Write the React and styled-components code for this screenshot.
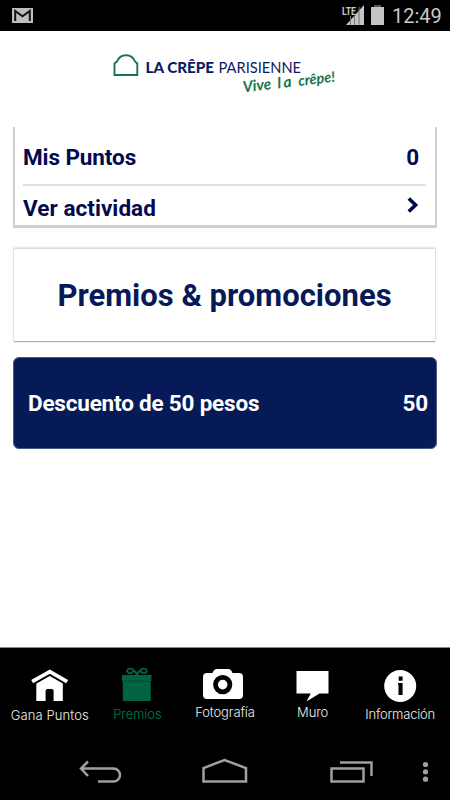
import React from 'react';
import styled, { createGlobalStyle } from 'styled-components';

const GlobalStyle = createGlobalStyle`
  * { box-sizing: border-box; }
  body { margin: 0; background: #fff; font-family: Roboto, 'Liberation Sans', sans-serif; }
  svg { display: block; flex: none; }
`;

const Screen = styled.div`
  display: flex;
  flex-direction: column;
  width: 450px;
  height: 800px;
  overflow: hidden;
  background: #fff;
`;

const StatusBar = styled.header`
  display: flex;
  justify-content: space-between;
  align-items: flex-start;
  height: 31px;
  padding: 0 8px 0 12px;
  background: #000;
  color: #c8c8c8;
`;

const StatusGroup = styled.div`
  display: flex;
  align-items: flex-start;
`;

const Clock = styled.span`
  width: 50px;
  margin-left: 7px;
  font-size: 20px;
  line-height: 33px;
  white-space: nowrap;
`;

const Brand = styled.div`
  height: 96px;
  padding: 13px 0 0 100px;
`;

const Content = styled.main`
  flex: 1;
  padding: 0 13px;
`;

const PointsPanel = styled.section`
  height: 101px;
  padding: 0 9px 0 8px;
  border: solid #d0d0d0;
  border-width: 0 2px 3px 2px;
`;

const PointsRow = styled.div`
  display: flex;
  justify-content: space-between;
  align-items: center;
  height: ${(p) => p.$height}px;
  padding-top: ${(p) => p.$top}px;
  padding-right: 7px;
  color: #02094f;
  font-size: 22.5px;
  font-weight: 700;
  letter-spacing: ${(p) => p.$spacing || 0}px;
  border-bottom: ${(p) => (p.$divided ? '2px solid #e2e2e2' : '0')};
`;

const TitleCard = styled.h1`
  display: flex;
  align-items: center;
  justify-content: center;
  height: 93px;
  margin: 20px 2px 0 1px;
  padding-top: 1px;
  border-top: 1px solid #dedede;
  box-shadow: 0 0 2px #bbb, 0 1px 1px #aaa;
  color: #071a58;
  font-size: 31px;
  font-weight: 700;
`;

const Reward = styled.section`
  display: flex;
  align-items: center;
  justify-content: space-between;
  height: 92px;
  margin-top: 16px;
  padding: 0 8px 0 14px;
  border: 1px solid #4b5a88;
  border-radius: 6px;
  background: #071a58;
  color: #fff;
  font-size: 22.5px;
  font-weight: 700;
  letter-spacing: -0.2px;
`;

const TabBar = styled.nav`
  display: grid;
  grid-template-columns: repeat(5, 1fr);
  height: 97px;
  padding: 17px 6px 0;
  border-top: 1px solid #888;
  background: #000;
`;

const Tab = styled.div`
  display: flex;
  flex-direction: column;
  align-items: center;
`;

const TabLabel = styled.span`
  margin-top: ${(p) => p.$top}px;
  font-family: Inter, 'Liberation Sans', sans-serif;
  font-size: 13px;
  font-weight: 300;
  line-height: 16px;
  letter-spacing: ${(p) => p.$spacing}px;
  color: ${(p) => (p.$active ? '#007a50' : '#f0f0f0')};
  white-space: nowrap;
`;

const SystemBar = styled.footer`
  height: 56px;
  background: #000;
`;

const MailIcon = () => (
  <svg width="22" height="31" viewBox="12 0 22 31">
    <rect x="12" y="8" width="21" height="15" fill="#bdbdbd" />
    <path d="M15.2 21V11l7.3 5.2L29.8 11v10" fill="none" stroke="#111" strokeWidth="2" />
  </svg>
);

const SignalIcon = () => (
  <svg width="44" height="31" viewBox="342 0 44 31">
    <path d="M347 25 365 5V25Z" fill="#c4c4c4" />
    <path d="M351.5 16v9M355.5 10v15M360 7v18" stroke="#777" strokeWidth="1" />
    <path d="M342 15.5H356.5L358 10V4H342" fill="#000" />
    <text x="343" y="14.5" fontSize="11.5" fontWeight="700" fill="#c8c8c8" textLength="14" lengthAdjust="spacingAndGlyphs">LTE</text>
    <path d="M375 5h7v2h3v18h-13V7h3Z" fill="#c4c4c4" />
    <path d="M375 5h7v2h-7z" fill="#555" />
  </svg>
);

const Logo = () => (
  <svg width="250" height="60" viewBox="100 44 250 60">
    <path d="M114.5 75V63.5L117 61.5C118.5 57.5 121.5 55.2 126 55.2S133.5 57.5 135 61.5L137.3 63.5V75Z" fill="none" stroke="#16754e" strokeWidth="1.9" />
    <g fontFamily="Lato, sans-serif" fontSize="15" fill="#091b62">
      <text x="145.5" y="72.5" fontWeight="900" textLength="68.5" lengthAdjust="spacingAndGlyphs">LA CRÊPE</text>
      <text x="218.5" y="72.5" textLength="82.5" lengthAdjust="spacingAndGlyphs">PARISIENNE</text>
    </g>
    <g fontFamily="Lato, sans-serif" fontSize="15.5" fontStyle="italic" fontWeight="700" fill="#16754e">
      <text transform="translate(243.5 92.5) rotate(-7)" textLength="28.5" lengthAdjust="spacingAndGlyphs">Vive</text>
      <text transform="translate(278 88.5) rotate(-7)" textLength="14" lengthAdjust="spacing">la</text>
      <text transform="translate(298.8 86) rotate(-7)" textLength="37" lengthAdjust="spacing" fontSize="14.5">crêpe!</text>
    </g>
  </svg>
);

const Chevron = () => (
  <svg width="12" height="24" viewBox="406 196 12 24">
    <path d="m407.8 198.5 6.8 6.5-6.8 6.5" fill="none" stroke="#02094f" strokeWidth="3.6" />
  </svg>
);

const HomeIcon = () => (
  <svg width="44" height="38" viewBox="28 665 44 38">
    <path d="m33.8 680.7 16-9 15.7 9" fill="none" stroke="#fff" strokeWidth="3.8" strokeLinecap="square" />
    <path d="M36.3 683 49.8 675.5l13 7.5V701H53.6v-10.3q0-1.7-1.7-1.7h-4.6q-1.7 0-1.7 1.7V701h-9.3Z" fill="#fff" />
    <path d="m34 684.3 15.8-9 15.6 9" fill="none" stroke="#000" strokeWidth="1.3" />
  </svg>
);

const GiftIcon = () => (
  <svg width="44" height="38" viewBox="115.5 665 44 38">
    <path d="M137.5 674.5C134 668.5 131 667.8 128.7 669.2 126 671 129 674 131.5 673S135 668.5 137.5 674.5C140 668.5 141 672 143.5 673S149 671 146.3 669.2C144 667.8 141 668.5 137.5 674.5Z" fill="none" stroke="#006341" strokeWidth="1.9" />
    <path d="M122.5 675h29.5v6h-.7v20h-28v-20h-.8Z" fill="#006341" />
    <path d="M123 681.2h28.5" stroke="#004b31" strokeWidth="1" />
  </svg>
);

const CameraIcon = () => (
  <svg width="44" height="38" viewBox="203 665 44 38">
    <path d="M207 673h5.5l1-2q1-2 3-2h12q2 0 3 2l1 2h6.5q4 0 4 4v18q0 4-4 4h-32q-4 0-4-4v-18q0-4 4-4Z" fill="#fff" />
    <circle cx="222.7" cy="684.6" r="7.2" fill="none" stroke="#000" strokeWidth="4.8" />
  </svg>
);

const WallIcon = () => (
  <svg width="44" height="38" viewBox="290.5 665 44 38">
    <path d="M296 671h32v22.5h-9l-13 8 4.3-8H296Z" fill="#fff" />
  </svg>
);

const InfoIcon = () => (
  <svg width="44" height="38" viewBox="378 665 44 38">
    <circle cx="400.2" cy="686" r="16" fill="#fff" />
    <path d="M398.7 676.5h3.9v4.2h-3.9zM398 683h4.6v12h-4.1v-10.5H398z" fill="#000" />
  </svg>
);

const tabs = [
  { label: 'Gana Puntos', Icon: HomeIcon, top: 4, spacing: 0.1 },
  { label: 'Premios', Icon: GiftIcon, top: 3, spacing: -0.1, active: true },
  { label: 'Fotografía', Icon: CameraIcon, top: 1, spacing: -0.1 },
  { label: 'Muro', Icon: WallIcon, top: 1, spacing: -0.1 },
  { label: 'Información', Icon: InfoIcon, top: 3, spacing: -0.2 },
];

const SystemIcons = () => (
  <svg width="450" height="56" viewBox="0 744 450 56">
    <g fill="none" stroke="#a0a0a0" strokeWidth="2.5">
      <path d="M81 768.5h32.5a6.5 6.5 0 0 1 0 13H98M88 761.5l-7 7 7 7.5" />
      <path d="M203.5 781.5V768l21-8 21.5 8v13.5Z" />
      <path d="M331.5 768.5h32v13h-32ZM340 762.5h31.5V776" />
    </g>
    <g fill="#a0a0a0">
      <circle cx="425.5" cy="764.5" r="2.6" />
      <circle cx="425.5" cy="771.8" r="2.6" />
      <circle cx="425.5" cy="779.2" r="2.6" />
    </g>
  </svg>
);

export default function App() {
  return (
    <Screen>
      <GlobalStyle />
      <StatusBar>
        <MailIcon />
        <StatusGroup>
          <SignalIcon />
          <Clock>12:49</Clock>
        </StatusGroup>
      </StatusBar>
      <Brand><Logo /></Brand>
      <Content>
        <PointsPanel>
          <PointsRow $height={59} $top={2} $spacing={-0.1} $divided>
            <span>Mis Puntos</span>
            <span>0</span>
          </PointsRow>
          <PointsRow $height={39} $top={4} $spacing={0.05}>
            <span>Ver actividad</span>
            <Chevron />
          </PointsRow>
        </PointsPanel>
        <TitleCard>Premios &amp; promociones</TitleCard>
        <Reward>
          <span>Descuento de 50 pesos</span>
          <span>50</span>
        </Reward>
      </Content>
      <TabBar>
        {tabs.map(({ label, Icon, top, spacing, active }) => (
          <Tab key={label}>
            <Icon />
            <TabLabel $top={top} $spacing={spacing} $active={active}>{label}</TabLabel>
          </Tab>
        ))}
      </TabBar>
      <SystemBar><SystemIcons /></SystemBar>
    </Screen>
  );
}
